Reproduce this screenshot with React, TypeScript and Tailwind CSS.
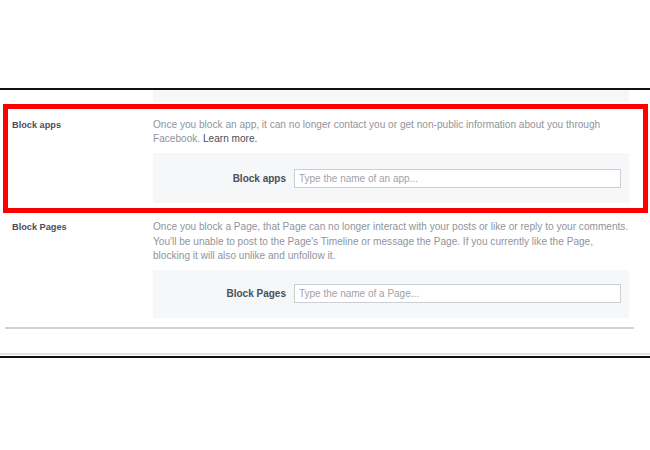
export default function App() {
  const font = { fontFamily: '"Liberation Sans", Arial, sans-serif' };
  return (
    <div className="w-[650px] h-[450px] bg-white overflow-hidden" style={font}>
      <div className="h-[88px]" />
      <div className="h-[2px] bg-[#111]" />
      {/* tail of the previous section's panel */}
      <div className="ml-[153px] w-[476px] h-[12px] bg-[#f6f7f9]" />
      <div className="h-[2px]" />

      {/* highlighted row */}
      <div className="ml-[3px] w-[645px] border-[5px] border-[#ff0000] flex">
        <div className="w-[145px] pl-[4px] pt-[9px] text-[9.2px] leading-[14px] font-bold text-[#4b4f56]">
          Block apps
        </div>
        <div className="w-[476px] pt-[9px] pb-[5px]">
          <p className="text-[10.1px] leading-[14px] text-[#90949c] whitespace-nowrap">
            Once you block an app, it can no longer contact you or get non-public information about you through
            <br />
            Facebook. <span className="text-[#4b4f56]">Learn more.</span>
          </p>
          <div className="mt-[7px] h-[50px] bg-[#f6f7f9] flex items-center pr-[8px]">
            <div className="w-[133px] text-right text-[10px] font-bold text-[#4b4f56]">Block apps</div>
            <input
              className="ml-[8px] w-[327px] h-[19px] bg-white border border-[#ccd0d5] px-[4px] text-[10px] text-[#4b4f56] placeholder:text-[#a0a3a9] outline-none"
              placeholder="Type the name of an app..."
            />
          </div>
        </div>
      </div>

      <div className="flex pl-[8px]">
        <div className="w-[145px] pl-[4px] pt-[7px] text-[9.2px] leading-[14px] font-bold text-[#4b4f56]">
          Block Pages
        </div>
        <div className="w-[476px] pt-[7px]">
          <p className="text-[10.1px] leading-[14.5px] text-[#90949c] whitespace-nowrap">
            Once you block a Page, that Page can no longer interact with your posts or like or reply to your comments.
            <br />
            You'll be unable to post to the Page's Timeline or message the Page. If you currently like the Page,
            <br />
            blocking it will also unlike and unfollow it.
          </p>
          <div className="mt-[6px] h-[48px] bg-[#f6f7f9] flex items-center pr-[8px]">
            <div className="w-[133px] text-right text-[10px] font-bold text-[#4b4f56]">Block Pages</div>
            <input
              className="ml-[8px] w-[327px] h-[19px] bg-white border border-[#ccd0d5] px-[4px] text-[10px] text-[#4b4f56] placeholder:text-[#a0a3a9] outline-none"
              placeholder="Type the name of a Page..."
            />
          </div>
        </div>
      </div>

      <div className="mt-[9px] ml-[5px] w-[629px] h-[2px] bg-[#cfd1d5]" />
      <div className="h-[24px]" />
      <div className="h-[2px] bg-[#e3e3e3]" />
      <div className="h-[1px]" />
      <div className="h-[2px] bg-[#111]" />
    </div>
  );
}
